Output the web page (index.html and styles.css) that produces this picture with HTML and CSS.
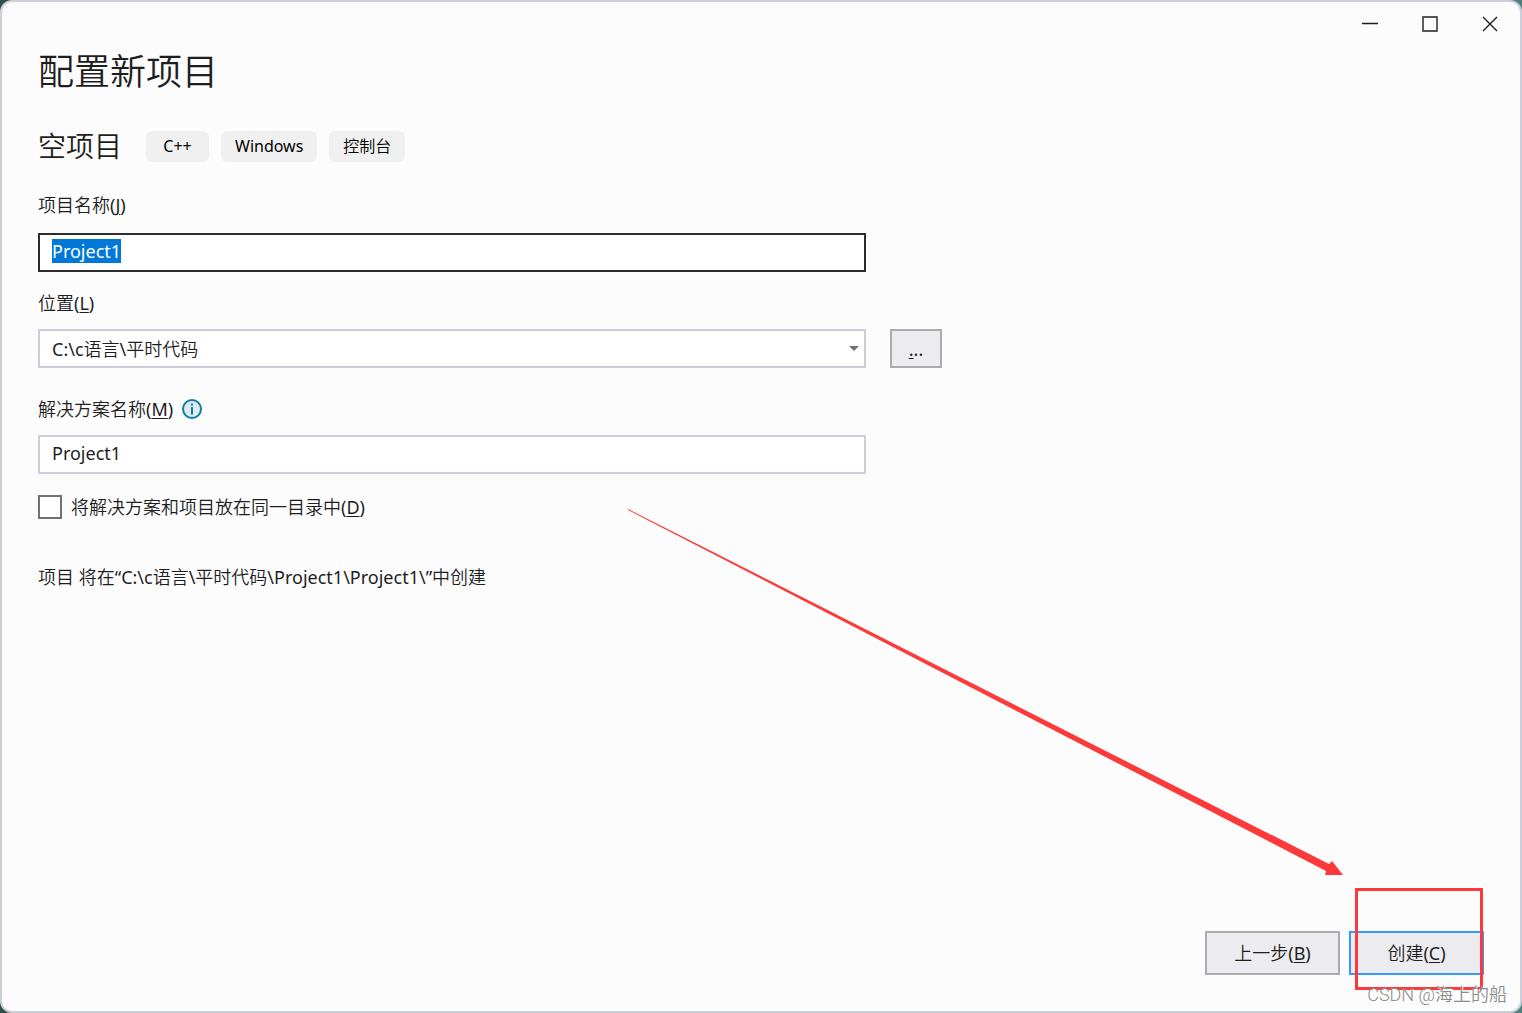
FILE: index.html
```html
<!DOCTYPE html>
<html lang="zh-CN">
<head>
	<meta charset="UTF-8">
	<title>配置新项目</title>
	<link rel="stylesheet" href="styles.css">
</head>
<body>
	<div class="window">
		<div class="titlebar">
			<button type="button" aria-label="最小化"><svg width="16" height="16" viewBox="0 0 16 16"><path d="M0 7.5h16"/></svg></button>
			<button type="button" aria-label="最大化"><svg width="16" height="16" viewBox="0 0 16 16"><path d="M1 1h14v14H1z"/></svg></button>
			<button type="button" aria-label="关闭"><svg width="16" height="16" viewBox="0 0 16 16"><path d="M1 1l14 14M15 1L1 15"/></svg></button>
		</div>

		<form class="content">
			<h1>配置新项目</h1>
			<div class="template">
				<h2>空项目</h2>
				<ul class="tags">
					<li>C++</li>
					<li>Windows</li>
					<li>控制台</li>
				</ul>
			</div>

			<div class="field name">
				<label for="name">项目名称(<u>J</u>)</label>
				<input class="text" type="text" id="name" value="Project1">
			</div>

			<div class="field location">
				<label for="location">位置(<u>L</u>)</label>
				<div class="row">
					<div class="combo">
						<select class="text" id="location">
							<option>C:\c语言\平时代码</option>
						</select>
						<svg width="10" height="5" viewBox="0 0 10 5"><path d="M0 0h10L5 5z"/></svg>
					</div>
					<button class="btn browse" type="button" aria-label="浏览"><span><u>.</u>..</span></button>
				</div>
			</div>

			<div class="field solution">
				<div class="label-row">
					<label for="solution">解决方案名称(<u>M</u>)</label>
					<svg class="info" width="20" height="20" viewBox="0 0 20 20">
						<circle cx="10" cy="10" r="9"/>
						<path d="M9 4.5h2v2H9zM9 8h2v7.5H9z"/>
					</svg>
				</div>
				<input class="text" type="text" id="solution" value="Project1">
			</div>

			<div class="check">
				<input type="checkbox" id="same">
				<label for="same">将解决方案和项目放在同一目录中(<u>D</u>)</label>
			</div>

			<p class="path">项目 将在“C:\c语言\平时代码\Project1\Project1\”中创建</p>

			<div class="footer">
				<button class="btn" type="button">上一步(<u>B</u>)</button>
				<div class="create">
					<button class="btn primary" type="button">创建(<u>C</u>)</button>
					<div class="mark"></div>
					<svg class="arrow" width="716" height="368" viewBox="0 0 716 368"><path d="M0 1L701 356l3-3 11 14h-18l1-4L0 2z"/></svg>
				</div>
			</div>
		</form>
		<div class="watermark">CSDN @海上的船</div>
	</div>

	<script type="text/javascript">
		// 打开时选中项目名称
		var input = document.querySelector('#name')
		input.focus()
		input.select()
	</script>
</body>
</html>
```
FILE: styles.css
```css
*{
	padding: 0;
	margin: 0;
	box-sizing: border-box;
}
body {
	background: linear-gradient(90deg, #2c4f4a, #4c8078);
	color: #1e1e1e;
	font-family: "Noto Sans", "Noto Sans CJK SC DemiLight", "Noto Sans CJK SC", sans-serif;
	font-size: 18px;
	font-weight: 400;
	line-height: 24px;
}
button, input, select {
	font: inherit;
	color: inherit;
}
ul {
	list-style: none;
}
u {
	text-underline-offset: 2px;
	text-decoration-thickness: 1px;
}
.window {
	min-height: 100vh;
	display: flex;
	flex-direction: column;
	position: relative;
	overflow: hidden;
	background: #fcfcfc;
	border: 2px solid #ccceDB;
	border-radius: 12px;
}

/* 标题栏 */
.titlebar {
	display: flex;
	justify-content: flex-end;
}
.titlebar button {
	width: 60px;
	height: 44px;
	display: flex;
	align-items: center;
	justify-content: center;
	border: none;
	background: none;
}
.titlebar svg {
	fill: none;
	stroke: #1e1e1e;
	stroke-width: 1.4;
}

/* 内容 */
.content {
	flex: 1;
	display: flex;
	flex-direction: column;
	padding: 0 36px 36px;
}
h1 {
	font-size: 36px;
	font-weight: 350;
	line-height: 52px;
}
.template {
	display: flex;
	align-items: center;
	gap: 24px;
	margin-top: 32px;
}
h2 {
	font-size: 28px;
	font-weight: 350;
	line-height: 32px;
}
.tags {
	display: flex;
	gap: 12px;
}
.tags li {
	min-width: 63px;
	padding: 0 14px;
	font-size: 16px;
	line-height: 31px;
	text-align: center;
	color: #000;
	background: #f0f0f0;
	border-radius: 6px;
}
.field {
	display: flex;
	flex-direction: column;
	gap: 14px;
	max-width: 828px;
}
.field.name {
	gap: 16px;
	margin-top: 31px;
}
.field.location {
	max-width: 904px;
	margin-top: 19px;
}
.field.solution {
	margin-top: 29px;
}
.text {
	width: 100%;
	height: 39px;
	padding: 0 12px 4px;
	border: 2px solid #ccceDB;
	border-radius: 0;
	background: #fff;
	outline: none;
	appearance: none;
}
.text:focus {
	border-color: #2d2d30;
}
.text::selection {
	color: #fff;
	background: #0078d7;
}
select.text {
	padding-bottom: 0;
}
.row {
	display: flex;
	gap: 24px;
}
.combo {
	flex: 1;
	position: relative;
}
.combo svg {
	position: absolute;
	right: 7px;
	top: 17px;
	fill: #717171;
	pointer-events: none;
}
.label-row {
	display: flex;
	align-items: center;
	gap: 9px;
}
.info circle {
	fill: #dfecef;
	stroke: #0a7fa5;
	stroke-width: 2;
}
.info path {
	fill: #0a7fa5;
}
.check {
	display: flex;
	align-items: center;
	gap: 9px;
	margin-top: 21px;
}
.check input {
	width: 24px;
	height: 24px;
	border: 2px solid #717171;
	background: #fff;
	appearance: none;
}
.path {
	margin-top: 46px;
}

/* 按钮 */
.btn {
	width: 135px;
	height: 44px;
	background: #ececf0;
	border: 2px solid #acacac;
}
.btn.browse {
	width: 52px;
	height: 39px;
}
.btn.primary {
	border-color: #3399ff;
}
.footer {
	display: flex;
	justify-content: flex-end;
	gap: 9px;
	margin-top: auto;
}
.create {
	position: relative;
}
.mark {
	position: absolute;
	left: 6px;
	top: -43px;
	width: 128px;
	height: 102px;
	border: 3px solid #fd3a3a;
	pointer-events: none;
}
.arrow {
	position: absolute;
	right: 140px;
	bottom: 99px;
	fill: #fd3a3a;
	pointer-events: none;
}
.watermark {
	position: absolute;
	right: 13px;
	bottom: 4px;
	font-family: Roboto, "Noto Sans CJK SC", sans-serif;
	font-weight: 350;
	color: #8c8c8c;
	text-shadow: 1px 1px 0 #fff;
}
```
